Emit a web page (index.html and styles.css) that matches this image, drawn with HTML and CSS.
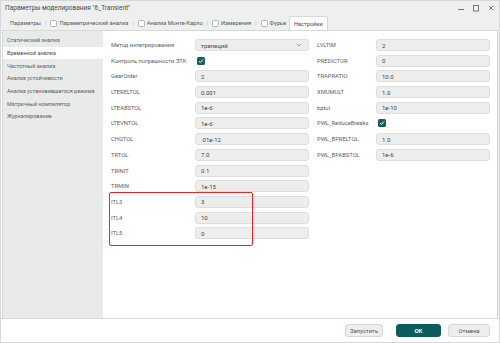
FILE: index.html
```html
<!DOCTYPE html>
<html lang="ru">
<head>
<meta charset="utf-8">
<link rel="stylesheet" href="styles.css">
</head>
<body>
<div class="window">
  <div class="titlebar">
    <span class="title">Параметры моделирования "6_Transient"</span>
    <div class="winctl">
      <svg width="8" height="8" viewBox="0 0 8 8"><path d="M1 5.5H7" stroke="#777" stroke-width="1"/></svg>
      <svg width="8" height="8" viewBox="0 0 8 8"><rect x="1.5" y="1.5" width="5" height="5.5" fill="none" stroke="#777" stroke-width="1"/></svg>
      <svg width="8" height="8" viewBox="0 0 8 8"><path d="M2 2L6 6M6 2L2 6" stroke="#777" stroke-width="1"/></svg>
    </div>
  </div>
  <div class="tabbar">
    <span class="tab">Параметры</span><span class="sep">|</span>
    <span class="tab"><i class="cb"></i>Параметрический анализ</span><span class="sep">|</span>
    <span class="tab"><i class="cb"></i>Анализ Монте-Карло</span><span class="sep">|</span>
    <span class="tab"><i class="cb"></i>Измерения</span><span class="sep">|</span>
    <span class="tab"><i class="cb"></i>Фурье</span>
    <span class="tab active">Настройки</span>
  </div>
  <div class="body">
    <div class="sidebar">
      <div class="nav">Статический анализ</div>
      <div class="nav selected">Временной анализ</div>
      <div class="nav">Частотный анализ</div>
      <div class="nav">Анализ устойчивости</div>
      <div class="nav">Анализ установившегося режима</div>
      <div class="nav">Матричный компилятор</div>
      <div class="nav">Журналирование</div>
    </div>
    <div class="main">
      <div class="form">
        <div class="col">
          <label>Метод интегрирования</label><div class="field select">трапеций<svg width="6" height="4" viewBox="0 0 6 4"><path d="M0.8 0.8L3 3L5.2 0.8" fill="none" stroke="#888" stroke-width="0.8"/></svg></div>
          <label>Контроль погрешности ЗТК</label><div class="check-cell"><span class="check"><svg width="6" height="6" viewBox="0 0 6 6"><path d="M1 3.2L2.4 4.5L5 1.5" fill="none" stroke="#fff" stroke-width="1"/></svg></span></div>
          <label>GearOrder</label><div class="field">2</div>
          <label>LTERELTOL</label><div class="field">0.001</div>
          <label>LTEABSTOL</label><div class="field">1e-6</div>
          <label>LTEVNTOL</label><div class="field">1e-6</div>
          <label>CHGTOL</label><div class="field">.01e-12</div>
          <label>TRTOL</label><div class="field">7.0</div>
          <label>TRINIT</label><div class="field">0.1</div>
          <label>TRMIN</label><div class="field">1e-15</div>
          <label>ITL3</label><div class="field">3</div>
          <label>ITL4</label><div class="field">10</div>
          <label>ITL5</label><div class="field">0</div>
        </div>
        <div class="col right">
          <label>LVLTIM</label><div class="field">2</div>
          <label>PREDICTOR</label><div class="field">0</div>
          <label>TRAPRATIO</label><div class="field">10.0</div>
          <label>XMUMULT</label><div class="field">1.0</div>
          <label>bptol</label><div class="field">1e-10</div>
          <label>PWL_ReduceBreaks</label><div class="check-cell"><span class="check"><svg width="6" height="6" viewBox="0 0 6 6"><path d="M1 3.2L2.4 4.5L5 1.5" fill="none" stroke="#fff" stroke-width="1"/></svg></span></div>
          <label>PWL_BPRELTOL</label><div class="field">1.0</div>
          <label>PWL_BPABSTOL</label><div class="field">1e-6</div>
        </div>
      </div>
      <div class="highlight"></div>
    </div>
  </div>
  <div class="footer">
    <button class="btn run">Запустить</button>
    <button class="btn primary">ОК</button>
    <button class="btn cancel">Отмена</button>
  </div>
</div>
</body>
</html>
```
FILE: styles.css
```css
* { box-sizing: border-box; }
html, body { margin: 0; padding: 0; }
body {
  width: 500px;
  height: 343px;
  font-family: Roboto, "Open Sans", "DejaVu Sans", sans-serif;
  font-size: 6px;
  color: #5e5e5e;
  background: #fff;
  overflow: hidden;
}
.window {
  width: 500px;
  height: 343px;
  display: flex;
  flex-direction: column;
  background: #eef0ef;
  border: 1px solid #d6d9d8;
}
.titlebar {
  height: 14px;
  display: flex;
  align-items: center;
  justify-content: space-between;
  padding: 0 4px 0 4px;
  color: #4a4a4a;
}
.title { font-size: 6.5px; }
.winctl { display: flex; gap: 7px; align-items: center; }
.tabbar {
  height: 15px;
  display: flex;
  align-items: flex-end;
  padding-left: 9px;
}
.tab {
  height: 14px;
  display: flex;
  align-items: center;
  color: #555;
  font-size: 5.7px;
}
.sep {
  height: 14px;
  display: flex;
  align-items: center;
  color: #b8bbba;
  padding: 0 4px;
  font-size: 5.7px;
}
.cb {
  width: 7px;
  height: 7px;
  border: 0.8px solid #b0b4b3;
  border-radius: 1.5px;
  background: #fff;
  margin-right: 2px;
  display: inline-block;
}
.tab.active {
  background: #fff;
  border: 1px solid #d6d9d8;
  border-bottom: none;
  border-radius: 3px 3px 0 0;
  padding: 0 4px;
  margin-left: 3px;
  color: #5a3a5a;
}
.body {
  height: 289px;
  display: flex;
  background: #fff;
  border-top: 1px solid #d6d9d8;
  border-bottom: 1px solid #d6d9d8;
  margin-right: 1px;
}
.sidebar {
  width: 101px;
  background: #e9ebea;
  padding-top: 3px;
  margin-left: 1px;
  border-left: 1px solid #d6d9d8;
}
.nav {
  height: 12.7px;
  display: flex;
  align-items: center;
  padding-left: 4px;
  color: #5e5e5e;
  font-size: 5.5px;
  white-space: nowrap;
}
.nav.selected { background: #fff; color: #5a3a5a; }
.main {
  flex: 1;
  position: relative;
  padding: 8px 0 0 8px;
  border-right: 1px solid #d6d9d8;
}
.form { display: flex; gap: 8px; align-items: flex-start; }
.col {
  display: grid;
  grid-template-columns: 84px 114px;
  grid-auto-rows: 12px;
  row-gap: 3.7px;
  align-items: center;
}
.col.right { grid-template-columns: 59px 114px; }
label {
  font-size: 5.8px;
  color: #5e5e5e;
  white-space: nowrap;
}
.field {
  height: 12px;
  background: #ededed;
  border: 1px solid #dcdedd;
  border-radius: 3px;
  display: flex;
  align-items: center;
  justify-content: space-between;
  padding: 0 6px 0 5px;
  font-size: 6px;
  color: #444;
}
.check-cell { display: flex; align-items: center; padding-left: 2px; }
.check {
  width: 8px;
  height: 8px;
  border-radius: 1.5px;
  background: #175f5f;
  display: flex;
  align-items: center;
  justify-content: center;
}
.highlight {
  position: absolute;
  left: 6px;
  top: 161px;
  width: 144px;
  height: 54px;
  border: 1.5px solid #e8262a;
  border-radius: 2px;
  pointer-events: none;
}
.footer {
  flex: 1;
  background: #fff;
  display: flex;
  align-items: center;
  justify-content: flex-end;
  padding-right: 9px;
}
.btn {
  height: 13px;
  border: 1px solid #d6d9d8;
  background: #ededed;
  border-radius: 3px;
  font-family: inherit;
  font-size: 5.9px;
  color: #555;
  padding: 0;
}
.btn.run { width: 38px; margin-right: 13px; }
.btn.primary {
  background: #0f5c5c;
  border-color: #0f5c5c;
  color: #fff;
  font-weight: 700;
  width: 45px;
  margin-right: 7px;
}
.btn.cancel { width: 42px; }
```
